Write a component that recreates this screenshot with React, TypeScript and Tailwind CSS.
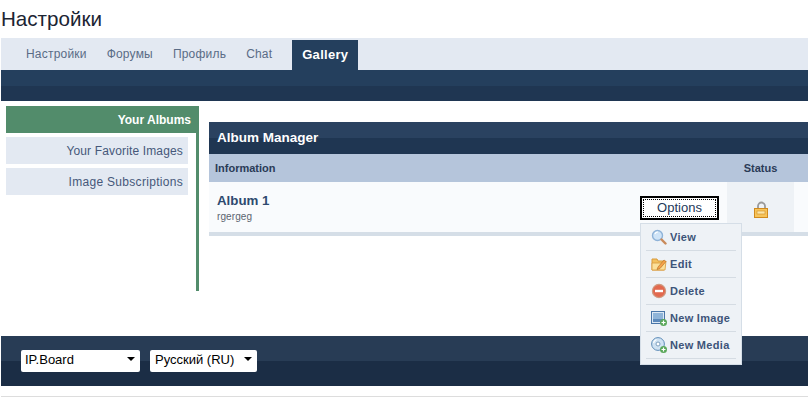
import React from 'react';

const MenuIcon = ({ name }: { name: string }) => {
  if (name === 'View') {
    return (
      <svg width="16" height="16" viewBox="0 0 16 16">
        <circle cx="6.5" cy="6.5" r="5" fill="#cfe4f7" stroke="#8fb3d8" strokeWidth="1.4" />
        <path d="M4 5a3 3 0 0 1 3-2" fill="none" stroke="#fff" strokeWidth="1.2" />
        <path d="M10.5 10.5l4 4" stroke="#c98a5a" strokeWidth="2.4" strokeLinecap="round" />
      </svg>
    );
  }
  if (name === 'Edit') {
    return (
      <svg width="16" height="16" viewBox="0 0 16 16">
        <path d="M1 3h5l1 2h6v9H1z" fill="#f2c15f" stroke="#d99a3a" />
        <path d="M1 7h12l2-2-1 9H1z" fill="#fbe09a" stroke="#d99a3a" strokeWidth="0.8" />
        <path d="M7 11l6-7 2 1.5-6 7-3 1z" fill="#f6a24a" stroke="#b9772c" strokeWidth="0.7" />
      </svg>
    );
  }
  if (name === 'Delete') {
    return (
      <svg width="16" height="16" viewBox="0 0 16 16">
        <circle cx="8" cy="8" r="6.6" fill="#e2694f" stroke="#cf9a80" strokeWidth="1.2" />
        <rect x="4" y="6.8" width="8" height="2.4" fill="#fff" />
      </svg>
    );
  }
  if (name === 'New Image') {
    return (
      <svg width="16" height="16" viewBox="0 0 16 16">
        <rect x="0.5" y="1.5" width="13" height="12" fill="#dce8f4" stroke="#4a76a8" />
        <rect x="2" y="3" width="10" height="6" fill="#8fb4d8" />
        <rect x="2" y="9" width="10" height="3" fill="#5d8abb" />
        <circle cx="12.5" cy="12.5" r="3.5" fill="#5aa85a" />
        <path d="M12.5 10.5v4M10.5 12.5h4" stroke="#fff" strokeWidth="1.2" />
      </svg>
    );
  }
  return (
    <svg width="16" height="16" viewBox="0 0 16 16">
      <circle cx="7" cy="7" r="6.4" fill="#cfe2f2" stroke="#5f8db8" />
      <circle cx="7" cy="7" r="2" fill="#fff" stroke="#7d9fbf" />
      <path d="M2.5 6a5 5 0 0 1 3-3.5" fill="none" stroke="#fff" strokeWidth="1.2" />
      <circle cx="12.5" cy="12.5" r="3.5" fill="#5aa85a" />
      <path d="M12.5 10.5v4M10.5 12.5h4" stroke="#fff" strokeWidth="1.2" />
    </svg>
  );
};

const menuItems = ['View', 'Edit', 'Delete', 'New Image', 'New Media'];
const navItems = ['Настройки', 'Форумы', 'Профиль', 'Chat'];

const Arrow = () => (
  <span className="pointer-events-none absolute right-[5px] top-[10px] h-0 w-0 border-x-[4px] border-t-[4px] border-x-transparent border-t-black" />
);

export default function App() {
  return (
    <div className="h-[408px] w-[808px] overflow-hidden bg-white pl-px font-['Liberation_Sans',Arial,sans-serif]">
      <h1 className="h-[38px] pt-[7px] text-[20.6px] leading-[24px] text-[#1c2533]">Настройки</h1>

      {/* Primary navigation */}
      <div className="flex h-[32px] items-end bg-[#e3e9f2] pl-[15px]">
        <ul className="flex h-[30px] items-center text-[12px] tracking-[0.2px] text-[#5a6c86]">
          {navItems.map((item) => (
            <li key={item} className="px-[10px] pb-[2px]">{item}</li>
          ))}
        </ul>
        <div className="ml-[10px] flex h-[30px] w-[66px] items-center justify-center bg-[#243f5d] text-[13px] font-bold tracking-[0.3px] text-white">
          Gallery
        </div>
      </div>
      <div className="h-[31px] bg-[linear-gradient(#243f5d_50%,#1f3652_50%)]" />

      <div className="flex h-[235px]">
        {/* Sidebar */}
        <div className="ml-[5px] mt-[5px] h-[185px] w-[193px] border-r-[3px] border-[#528c6b]">
          <div className="flex h-[27px] items-center justify-end bg-[#528c6b] pr-[5px] text-[12px] font-bold text-white">
            Your Albums
          </div>
          <div className="mt-[4px] flex h-[27px] w-[182px] items-center justify-end bg-[#e3e9f2] pr-[5px] text-[12px] tracking-[0.15px] text-[#46587a]">
            Your Favorite Images
          </div>
          <div className="mt-[4px] flex h-[27px] w-[182px] items-center justify-end bg-[#e3e9f2] pr-[5px] text-[12px] tracking-[0.3px] text-[#46587a]">
            Image Subscriptions
          </div>
        </div>

        {/* Album manager */}
        <div className="ml-[10px] mt-[21px] flex-1">
          <div className="flex h-[32px] items-center bg-[linear-gradient(#2a4260_50%,#1f3652_50%)] pl-[8px] pt-[1px] text-[13.5px] font-bold text-white">
            Album Manager
          </div>
          <div className="flex h-[28px] items-center bg-[#b5c5db] text-[11px] font-bold text-[#2a3b57]">
            <div className="w-[518px] pl-[6px]">Information</div>
            <div className="w-[67px] text-center">Status</div>
          </div>
          <div className="relative flex h-[54px] border-b-[4px] border-[#d5dee7] bg-[#f9fbfd]">
            <div className="w-[431px] pl-[8px] pt-[11px]">
              <div className="text-[13.3px] leading-[16px] font-bold text-[#2e4a6f]">Album 1</div>
              <div className="mt-[2px] text-[10px] leading-[12px] tracking-[0.1px] text-[#5c6470]">rgergeg</div>
            </div>
            <div className="w-[87px] pt-[14px]">
              <button className="flex h-[24px] w-[79px] items-center justify-center border-2 border-black bg-white text-[13px] text-[#23395a] outline-1 -outline-offset-4 outline-black outline-dotted">
                Options
              </button>
            </div>
            <div className="flex w-[67px] items-start justify-center bg-[#eef2f6] pt-[19px]">
              <svg width="16" height="17" viewBox="0 0 16 17">
                <path d="M5 8V5a3.5 3.5 0 0 1 7 0v3" fill="none" stroke="#9a9a9a" strokeWidth="1.8" />
                <rect x="1.5" y="7.5" width="13" height="9" fill="#f7c45a" stroke="#d08a1e" />
                <rect x="4" y="10" width="8" height="3" fill="#fbe6a8" stroke="#d08a1e" strokeWidth="0.6" />
              </svg>
            </div>

            {/* Options menu */}
            <div className="absolute left-[431px] top-[41px] z-10 w-[102px] border border-[#d5dee7] bg-[#eef2f6] px-[5px]">
              {menuItems.map((item) => (
                <div key={item} className="flex h-[27px] items-center gap-[3px] border-b border-[#d5dce3] pl-[5px] text-[11px] font-bold tracking-[0.3px] text-[#3d5479]">
                  <span className="flex w-[16px] shrink-0"><MenuIcon name={item} /></span>
                  {item}
                </div>
              ))}
              <div className="h-[5px]" />
            </div>
          </div>
        </div>
      </div>

      {/* Footer */}
      <div className="flex h-[50px] items-start gap-[10px] bg-[linear-gradient(#283c55_50%,#1b2d45_50%)] pl-[20px] pt-[11px]">
        <div className="relative h-[22px] w-[119px]">
          <select className="h-full w-full appearance-none rounded-[2px] bg-white pb-[4px] pl-[4px] text-[13px] text-black">
            <option>IP.Board</option>
          </select>
          <Arrow />
        </div>
        <div className="relative h-[22px] w-[107px]">
          <select className="h-full w-full appearance-none rounded-[2px] bg-white pb-[4px] pl-[5px] text-[13px] text-black">
            <option>Русский (RU)</option>
          </select>
          <Arrow />
        </div>
      </div>
      <div className="mt-[10px] h-px bg-[#dddddd]" />
    </div>
  );
}
